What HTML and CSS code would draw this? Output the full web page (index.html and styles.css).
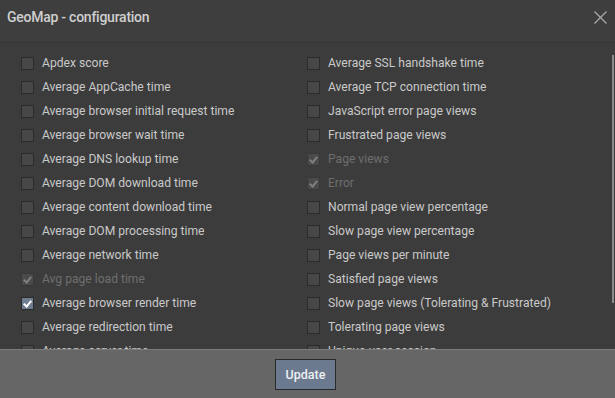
FILE: index.html
```html
<!DOCTYPE html>
<html lang="en">
<head>
  <meta charset="UTF-8">
  <meta name="viewport" content="width=device-width, initial-scale=1.0">
  <title>GeoMap - configuration</title>
  <link rel="stylesheet" href="styles.css">
</head>
<body>
  <div class="dialog">
    <div class="dialog-header">
      <h1>GeoMap - configuration</h1>
      <button class="close-btn" aria-label="Close">
        <svg width="13" height="13" viewBox="0 0 13 13">
          <path d="M0.5 0.5 L12.5 12.5 M12.5 0.5 L0.5 12.5" stroke="#a8a8a8" stroke-width="1.3" fill="none"/>
        </svg>
      </button>
    </div>

    <div class="dialog-body">
      <div class="metric-list">
        <label class="metric"><span class="box"></span>Apdex score</label>
        <label class="metric"><span class="box"></span>Average SSL handshake time</label>
        <label class="metric"><span class="box"></span>Average AppCache time</label>
        <label class="metric"><span class="box"></span>Average TCP connection time</label>
        <label class="metric"><span class="box"></span>Average browser initial request time</label>
        <label class="metric"><span class="box"></span>JavaScript error page views</label>
        <label class="metric"><span class="box"></span>Average browser wait time</label>
        <label class="metric"><span class="box"></span>Frustrated page views</label>
        <label class="metric"><span class="box"></span>Average DNS lookup time</label>
        <label class="metric disabled"><span class="box checked"></span>Page views</label>
        <label class="metric"><span class="box"></span>Average DOM download time</label>
        <label class="metric disabled"><span class="box checked"></span>Error</label>
        <label class="metric"><span class="box"></span>Average content download time</label>
        <label class="metric"><span class="box"></span>Normal page view percentage</label>
        <label class="metric"><span class="box"></span>Average DOM processing time</label>
        <label class="metric"><span class="box"></span>Slow page view percentage</label>
        <label class="metric"><span class="box"></span>Average network time</label>
        <label class="metric"><span class="box"></span>Page views per minute</label>
        <label class="metric disabled"><span class="box checked"></span>Avg page load time</label>
        <label class="metric"><span class="box"></span>Satisfied page views</label>
        <label class="metric"><span class="box checked"></span>Average browser render time</label>
        <label class="metric"><span class="box"></span>Slow page views (Tolerating &amp; Frustrated)</label>
        <label class="metric"><span class="box"></span>Average redirection time</label>
        <label class="metric"><span class="box"></span>Tolerating page views</label>
        <label class="metric"><span class="box"></span>Average server time</label>
        <label class="metric"><span class="box"></span>Unique user session</label>
      </div>
      <div class="scroll-thumb"></div>
    </div>

    <div class="dialog-footer">
      <button class="update-btn">Update</button>
    </div>
  </div>
</body>
</html>
```

FILE: styles.css
```css
body {
  margin: 0;
  font-family: Roboto, "Liberation Sans", sans-serif;
  background-color: #3c3c3c;
}

.dialog {
  display: flex;
  flex-direction: column;
  height: 398px;
  overflow: hidden;
}

.dialog-header {
  display: flex;
  align-items: center;
  justify-content: space-between;
  height: 42px;
  padding: 0 8px 0 7px;
  background-color: #3e3e3e;
  border-bottom: 1px solid #353535;
}

.dialog-header h1 {
  margin: 0 0 8px;
  font-size: 14px;
  font-weight: 500;
  letter-spacing: -0.25px;
  color: #cfcfcf;
}

.close-btn {
  display: flex;
  padding: 0;
  margin-bottom: 8px;
  background: none;
  border: none;
  cursor: pointer;
}

.dialog-body {
  position: relative;
  height: 306px;
  overflow: hidden;
  background-color: #3c3c3c;
}

.metric-list {
  display: grid;
  grid-template-columns: 286px 1fr;
  padding: 8px 0 0 21px;
}

.metric {
  display: flex;
  align-items: center;
  height: 24px;
  font-size: 12.1px;
  color: #c9c9c9;
  cursor: pointer;
}

.box {
  position: relative;
  width: 11px;
  height: 11px;
  margin-right: 8px;
  background-color: #474747;
  border: 1px solid #2b2b2b;
}

.box.checked {
  background-color: #6e7d92;
}

.box.checked::after {
  content: "";
  position: absolute;
  left: 3px;
  top: 1px;
  width: 3px;
  height: 6px;
  border: solid #fff;
  border-width: 0 2px 2px 0;
  transform: rotate(40deg);
}

.metric.disabled {
  color: #6e6e6e;
}

.metric.disabled .box {
  background-color: #4a4a4a;
  border-color: #383838;
}

.metric.disabled .box::after {
  border-color: #808080;
}

.scroll-thumb {
  position: absolute;
  right: 1px;
  top: 12px;
  width: 2px;
  height: 248px;
  background-color: #8a8a8a;
}

.dialog-footer {
  display: flex;
  justify-content: center;
  align-items: flex-start;
  flex: 1;
  padding: 9px 4px 0 0;
  background-color: #666;
  border-top: 1px solid #7c7c7c;
}

.update-btn {
  width: 61px;
  height: 31px;
  padding: 0;
  font-family: Roboto, "Liberation Sans", sans-serif;
  font-size: 12.5px;
  font-weight: 500;
  color: #eef0f3;
  background-color: #6b7a8f;
  border: 1px solid #2a2a2a;
  cursor: pointer;
}
```
